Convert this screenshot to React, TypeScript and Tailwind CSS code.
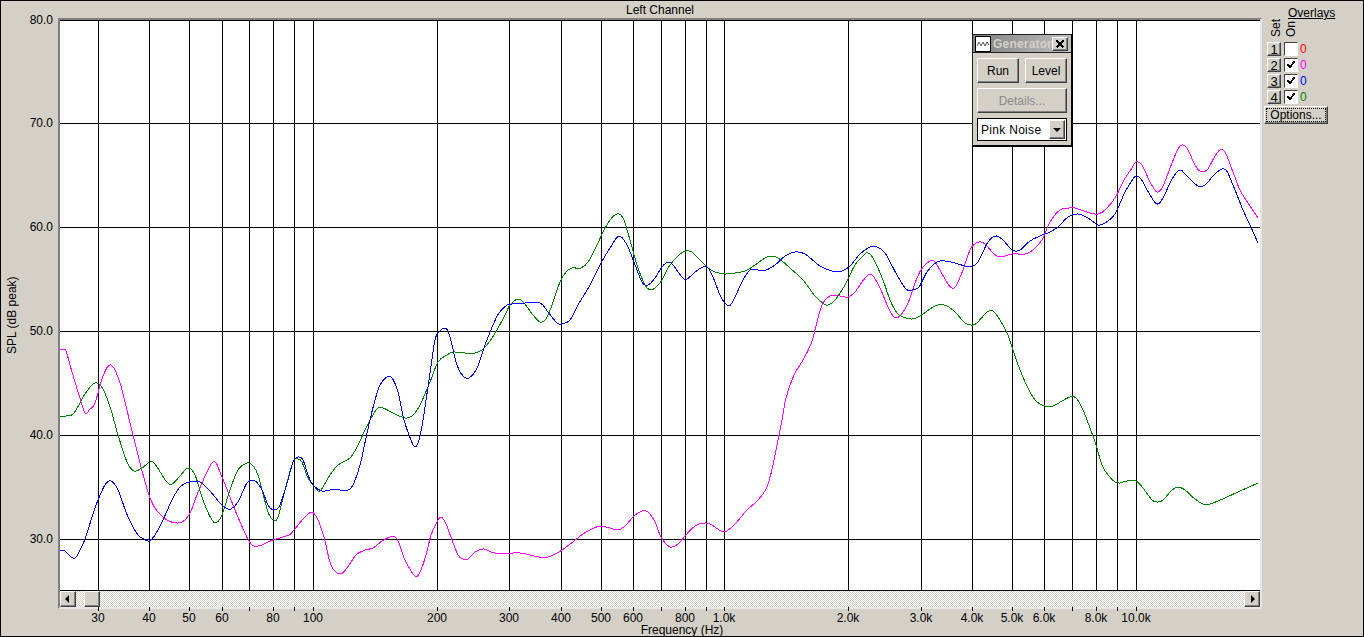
import React from 'react';

type Pt = [number, number];

const vLines = [98, 149, 189, 222, 249, 273, 294, 313, 437, 509, 561, 601, 633, 661, 685, 706, 724, 848, 921, 972, 1012, 1044, 1072, 1096, 1117, 1136];
const hLines = [20, 123, 227, 331, 435, 539];

const yLabels: [string, number][] = [['80.0', 20], ['70.0', 123], ['60.0', 227], ['50.0', 331], ['40.0', 435], ['30.0', 539]];
const xLabels: [string, number][] = [
  ['30', 98], ['40', 149], ['50', 189], ['60', 222], ['80', 273], ['100', 313], ['200', 437], ['300', 509], ['400', 561], ['500', 601],
  ['600', 633], ['800', 685], ['1.0k', 724], ['2.0k', 848], ['3.0k', 921], ['4.0k', 972], ['5.0k', 1012], ['6.0k', 1044], ['8.0k', 1096], ['10.0k', 1136],
];

const magenta: Pt[] = [
  [60, 350], [63, 350], [66, 351], [72, 372], [79, 395], [85, 413], [90, 409], [95, 403], [103, 376], [111, 365], [120, 383], [133, 435], [149, 495], [162, 516], [178, 523], [189, 515], [199, 490], [213, 462], [222, 477],
  [235, 510], [249, 541], [258, 546], [273, 540], [289, 535], [294, 530], [304, 518], [312, 512], [318, 520], [324, 537], [331, 565], [340, 574], [347, 568], [356, 555], [365, 550], [373, 548],
  [382, 541], [390, 537], [395, 537], [399, 543], [405, 560], [415, 576], [420, 572], [426, 555], [431, 535], [437, 522], [441, 517], [446, 524], [452, 540], [458, 555], [463, 559], [468, 559],
  [475, 552], [484, 549], [495, 553], [520, 553], [530, 555], [539, 557], [548, 557], [557, 553], [565, 548], [574, 541], [583, 534], [594, 528], [601, 526], [610, 528], [617, 530], [624, 527],
  [634, 516], [642, 511], [648, 512], [655, 522], [661, 537], [670, 547], [678, 544], [685, 536], [695, 526], [705, 523], [712, 525], [724, 532], [735, 524], [746, 511], [758, 500], [767, 487],
  [773, 465], [778, 440], [782, 420], [786, 398], [794, 375], [803, 360], [811, 344], [815, 330], [822, 305], [830, 296], [840, 296], [848, 297], [855, 292], [862, 282], [868, 275], [873, 276],
  [880, 288], [888, 307], [894, 317], [900, 316], [908, 303], [915, 283], [921, 270], [930, 261], [935, 262], [941, 272], [948, 284], [952, 288], [956, 286], [963, 270], [971, 248], [979, 242],
  [985, 244], [993, 253], [1000, 257], [1012, 254], [1025, 254], [1033, 250], [1042, 240], [1050, 222], [1060, 210], [1069, 208], [1075, 208], [1090, 213], [1098, 214], [1105, 210], [1115, 198],
  [1124, 180], [1132, 168], [1136, 162], [1142, 165], [1150, 182], [1157, 192], [1163, 186], [1172, 163], [1178, 149], [1182, 145], [1187, 148], [1195, 165], [1200, 171], [1207, 170], [1215, 156],
  [1220, 150], [1225, 152], [1233, 172], [1240, 190], [1250, 206], [1258, 218],
];

const blue: Pt[] = [
  [60, 551], [65, 551], [75, 558], [85, 539], [92, 517], [98, 500], [105, 485], [111, 481], [118, 490], [128, 517], [138, 535], [144, 539], [149, 541], [155, 535], [163, 520], [172, 500], [180, 487],
  [189, 482], [200, 482], [209, 490], [220, 503], [226, 508], [231, 509], [238, 502], [247, 483], [255, 481], [262, 490], [268, 505], [274, 510], [280, 505], [288, 480], [293, 462], [298, 457],
  [303, 460], [308, 475], [313, 485], [322, 491], [330, 490], [340, 490], [348, 490], [353, 485], [360, 465], [366, 438], [370, 420], [375, 400], [380, 385], [387, 377], [392, 378], [398, 392],
  [404, 420], [411, 440], [415, 447], [419, 440], [423, 420], [429, 380], [435, 340], [440, 331], [444, 328], [448, 331], [452, 345], [457, 365], [463, 376], [469, 378], [477, 368], [485, 345],
  [493, 325], [499, 313], [507, 305], [512, 304], [525, 303], [540, 303], [548, 312], [557, 323], [562, 324], [570, 320], [578, 305], [590, 285], [600, 265], [610, 248], [619, 236], [627, 245],
  [634, 262], [642, 282], [648, 285], [655, 278], [662, 267], [668, 262], [673, 265], [682, 277], [687, 279], [695, 272], [703, 267], [708, 268], [713, 277], [720, 295], [727, 305], [732, 303],
  [742, 282], [750, 270], [758, 270], [766, 270], [775, 265], [785, 256], [795, 252], [805, 254], [820, 266], [832, 271], [842, 271], [850, 266], [860, 254], [870, 247], [877, 247], [885, 253],
  [897, 275], [906, 289], [912, 290], [919, 287], [927, 272], [937, 262], [945, 261], [955, 263], [965, 266], [972, 266], [978, 262], [988, 242], [996, 236], [1003, 240], [1012, 250], [1020, 250],
  [1030, 241], [1040, 236], [1050, 232], [1058, 227], [1068, 217], [1078, 214], [1088, 218], [1098, 225], [1105, 223], [1115, 214], [1125, 192], [1133, 179], [1136, 176], [1141, 179], [1150, 195],
  [1157, 204], [1163, 198], [1172, 179], [1180, 170], [1187, 176], [1198, 186], [1205, 185], [1213, 176], [1220, 170], [1226, 170], [1233, 185], [1243, 210], [1250, 225], [1258, 243],
];

const green: Pt[] = [
  [60, 416], [66, 416], [74, 413], [85, 394], [95, 383], [103, 389], [111, 410], [118, 435], [127, 462], [134, 471], [142, 468], [150, 462], [155, 464], [166, 481], [172, 484], [180, 476], [188, 468],
  [195, 475], [203, 500], [212, 520], [217, 522], [222, 515], [230, 490], [238, 470], [247, 463], [252, 465], [258, 475], [268, 512], [274, 520], [278, 517], [285, 490], [293, 462], [298, 459],
  [302, 462], [308, 478], [315, 487], [320, 491], [330, 475], [338, 465], [350, 458], [358, 445], [365, 430], [370, 420], [377, 409], [383, 408], [395, 414], [405, 418], [412, 416], [420, 405],
  [430, 382], [438, 362], [447, 355], [453, 352], [465, 353], [475, 353], [482, 350], [490, 341], [497, 330], [505, 315], [510, 305], [518, 299], [524, 303], [533, 315], [540, 322], [546, 319],
  [552, 305], [560, 282], [566, 272], [572, 268], [581, 268], [588, 262], [597, 245], [603, 232], [610, 220], [617, 214], [623, 218], [630, 240], [637, 265], [645, 285], [651, 290], [657, 286],
  [662, 280], [670, 265], [680, 254], [686, 251], [692, 252], [700, 260], [708, 268], [715, 272], [725, 274], [735, 273], [745, 271], [755, 265], [765, 258], [771, 256], [778, 258], [790, 268],
  [803, 280], [815, 296], [824, 304], [828, 305], [835, 300], [845, 285], [855, 265], [865, 254], [868, 253], [873, 258], [883, 280], [890, 300], [897, 313], [903, 317], [912, 319], [920, 316],
  [930, 309], [938, 305], [947, 306], [955, 312], [965, 323], [972, 325], [977, 323], [987, 312], [993, 311], [1000, 320], [1008, 335], [1012, 347], [1020, 370], [1030, 392], [1037, 402], [1045, 406],
  [1053, 406], [1062, 401], [1070, 397], [1076, 398], [1083, 410], [1090, 428], [1096, 445], [1102, 465], [1108, 475], [1115, 482], [1120, 483], [1127, 481], [1136, 481], [1143, 488], [1152, 500],
  [1158, 502], [1163, 500], [1172, 490], [1178, 487], [1185, 490], [1195, 499], [1203, 504], [1210, 504], [1225, 498], [1240, 491], [1258, 483],
];

// catmull-rom through the traced points
const toPath = (pts: Pt[]) => {
  let d = `M${pts[0][0]} ${pts[0][1]}`;
  for (let i = 0; i < pts.length - 1; i++) {
    const p0 = pts[Math.max(i - 1, 0)];
    const p1 = pts[i];
    const p2 = pts[i + 1];
    const p3 = pts[Math.min(i + 2, pts.length - 1)];
    const c1x = p1[0] + (p2[0] - p0[0]) / 6;
    const c1y = p1[1] + (p2[1] - p0[1]) / 6;
    const c2x = p2[0] - (p3[0] - p1[0]) / 6;
    const c2y = p2[1] - (p3[1] - p1[1]) / 6;
    d += `C${c1x.toFixed(1)} ${c1y.toFixed(1)} ${c2x.toFixed(1)} ${c2y.toFixed(1)} ${p2[0]} ${p2[1]}`;
  }
  return d;
};

const raised = 'border border-t-white border-l-white border-r-[#404040] border-b-[#404040] shadow-[inset_-1px_-1px_0_#808080] bg-[#d4d0c8]';

const Arrow = ({ dir }: { dir: 'left' | 'right' | 'down' }) => {
  const pts = dir === 'left' ? '5,0 5,8 1,4' : dir === 'right' ? '3,0 3,8 7,4' : '0,2 8,2 4,6';
  return (
    <svg width="8" height="8" viewBox="0 0 8 8">
      <polygon points={pts} fill="#000" />
    </svg>
  );
};

const Check = () => (
  <svg width="10" height="10" viewBox="0 0 10 10" shapeRendering="crispEdges">
    <path d="M1.5 4 L4 7 L8.5 1.5" fill="none" stroke="#000" strokeWidth="2" />
  </svg>
);

const overlayRows = [
  { n: 1, on: false, color: 'text-[#ff0000]' },
  { n: 2, on: true, color: 'text-[#ff00ff]' },
  { n: 3, on: true, color: 'text-[#0000ff]' },
  { n: 4, on: true, color: 'text-[#008000]' },
];

const Generator = () => (
  <div className="absolute left-[971px] top-[33px] w-[101px] h-[113px] bg-[#d4d0c8] border border-[#202020] border-r-2 border-b-2 border-r-black border-b-black flex flex-col">
    <div className="h-[18px] flex items-center pl-[2px] pr-[3px] bg-gradient-to-r from-[#808080] to-[#c0c0c0] border-b border-[#202020] shrink-0">
      <div className="w-[16px] h-[16px] bg-white border border-black flex items-center justify-center shrink-0">
        <svg width="12" height="8" viewBox="0 0 12 8">
          <path d="M0 6 L2 2 L4 6 L6 2 L8 6 L10 2 L12 5" fill="none" stroke="#555" strokeWidth="1" />
        </svg>
      </div>
      <span className="ml-[2px] flex-1 overflow-hidden whitespace-nowrap font-bold text-[12px] text-[#d4d0c8] tracking-[0.2px]">Generator</span>
      <div className={`${raised} w-[16px] h-[14px] flex items-center justify-center shrink-0`}>
        <svg width="8" height="8" viewBox="0 0 8 8" shapeRendering="crispEdges">
          <path d="M0.5 0.5 L7.5 7.5 M7.5 0.5 L0.5 7.5" stroke="#000" strokeWidth="1.6" />
        </svg>
      </div>
    </div>
    <div className="flex flex-col px-[4px] pt-[5px] gap-[5px]">
      <div className="flex justify-between">
        <div className={`${raised} w-[42px] h-[25px] flex items-center justify-center`}>Run</div>
        <div className={`${raised} w-[42px] h-[25px] flex items-center justify-center`}>Level</div>
      </div>
      <div className={`${raised} h-[25px] flex items-center justify-center text-[#8a8a8a]`}>Details...</div>
      <div className="h-[23px] bg-white border border-black flex items-center pl-[3px] pr-[1px] justify-between">
        <span className="tracking-[0.3px]">Pink Noise</span>
        <div className={`${raised} w-[16px] h-[19px] flex items-center justify-center`}>
          <Arrow dir="down" />
        </div>
      </div>
    </div>
  </div>
);

const OverlayPanel = () => (
  <div className="flex-1 flex flex-col pt-[5px] pl-[2px]">
    <span className="ml-[24px] leading-[14px] underline">Overlays</span>
    <div className="flex h-[18px] -mt-px ml-[5px] items-end leading-[14px]">
      <span className="w-[15px] [writing-mode:vertical-rl] rotate-180">Set</span>
      <span className="[writing-mode:vertical-rl] rotate-180">On</span>
    </div>
    <div className="flex flex-col mt-[5px] ml-[3px]">
      {overlayRows.map((r) => (
        <div key={r.n} className="flex items-start h-[16px]">
          <div className={`${raised} w-[14px] h-[14px] flex items-center justify-center leading-none text-[13px]`}>{r.n}</div>
          <div className="ml-[3px] w-[14px] h-[14px] bg-white border border-t-[#404040] border-l-[#404040] border-r-white border-b-white flex items-center justify-center">
            {r.on && <Check />}
          </div>
          <span className={`ml-[2px] leading-[14px] ${r.color}`}>0</span>
        </div>
      ))}
    </div>
    <div className={`${raised} w-[64px] h-[18px] p-px flex`}>
      <div className="flex-1 border border-dotted border-black flex items-center justify-center leading-none">Options...</div>
    </div>
  </div>
);

export default function App() {
  return (
    <div className="relative w-[1364px] h-[637px] box-border border border-black bg-[#d4d0c8] flex text-[12px] text-black font-['Liberation_Sans',Arial,sans-serif] overflow-hidden">
      <div className="relative w-[57px] shrink-0">
        {yLabels.map(([t, y]) => (
          <span key={t} className="absolute right-[5px] -translate-y-1/2 leading-none" style={{ top: y - 1 }}>{t}</span>
        ))}
        <span className="absolute left-[4px] top-[281px] h-[72px] [writing-mode:vertical-rl] rotate-180 leading-[14px] whitespace-nowrap">SPL (dB peak)</span>
      </div>

      <div className="w-[1204px] shrink-0 flex flex-col">
        <div className="h-[17px] shrink-0 flex items-center justify-center leading-none">Left Channel</div>
        <div className="h-[591px] shrink-0 box-border border-2 border-t-[#808080] border-l-[#808080] border-r-[#e6e6e6] border-b-[#e6e6e6] flex flex-col bg-white">
          <svg width="1200" height="570" viewBox="60 20 1200 570" className="block shrink-0">
            <g stroke="#000" strokeWidth="1" shapeRendering="crispEdges">
              {vLines.map((x) => <line key={x} x1={x + 0.5} x2={x + 0.5} y1="20" y2="590" />)}
              {hLines.map((y) => <line key={y} x1="60" x2="1260" y1={y + 0.5} y2={y + 0.5} />)}
            </g>
            <g fill="none" strokeWidth="1" shapeRendering="crispEdges">
              <path d={toPath(magenta)} stroke="#ff00ff" />
              <path d={toPath(green)} stroke="#008000" />
              <path d={toPath(blue)} stroke="#0000ff" />
            </g>
          </svg>
          <div className="h-[17px] border-t border-black box-border flex items-stretch bg-[repeating-conic-gradient(#d4d0c8_0%_25%,#ffffff_0%_50%)] bg-[length:2px_2px]">
            <div className={`${raised} w-[16px] flex items-center justify-center`}>
              <Arrow dir="left" />
            </div>
            <div className={`${raised} w-[16px] ml-[8px]`} />
            <div className="flex-1" />
            <div className={`${raised} w-[16px] flex items-center justify-center`}>
              <Arrow dir="right" />
            </div>
          </div>
        </div>
        <div className="relative flex-1 min-h-0 flex flex-col">
          {vLines.map((x) => (
            <div key={x} className="absolute top-[-2px] h-[4px] w-px bg-black" style={{ left: x - 58 }} />
          ))}
          <div className="relative h-[13px] mt-[2px] shrink-0">
            {xLabels.map(([t, x]) => (
              <span key={t} className="absolute top-0 -translate-x-1/2 leading-[14px]" style={{ left: x - 58 }}>{t}</span>
            ))}
          </div>
          <div className="pl-[44px] text-center leading-[12px] whitespace-nowrap">Frequency (Hz)</div>
        </div>
      </div>

      <OverlayPanel />
      <Generator />
    </div>
  );
}
